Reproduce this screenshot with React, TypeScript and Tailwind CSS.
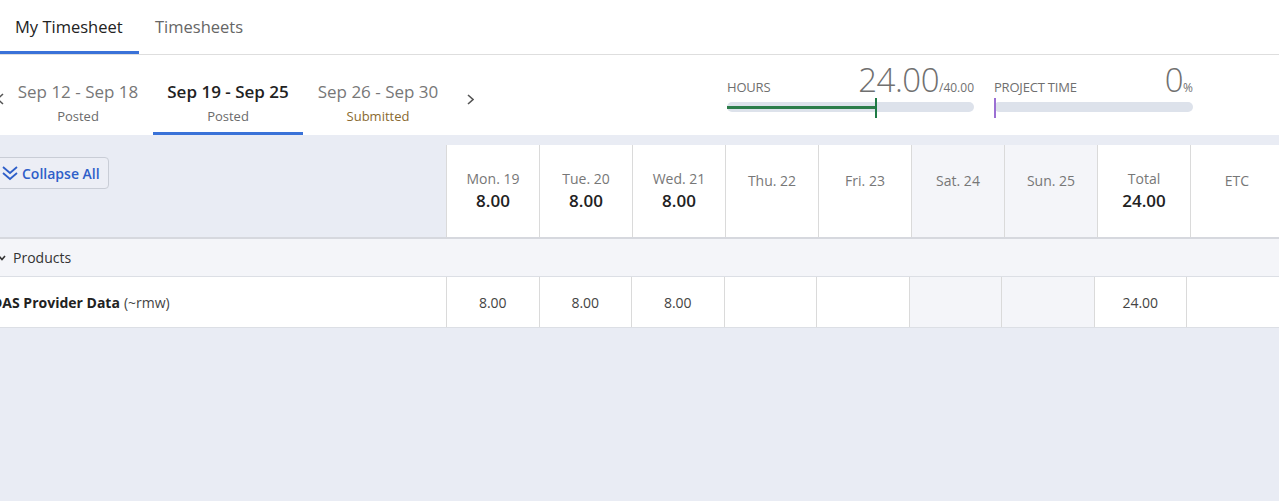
import React from 'react';

const WEEKS = [
  { label: 'Sep 12 - Sep 18', status: 'Posted', active: false },
  { label: 'Sep 19 - Sep 25', status: 'Posted', active: true },
  { label: 'Sep 26 - Sep 30', status: 'Submitted', active: false },
];

const DAYS = [
  { name: 'Mon. 19', total: '8.00', value: '8.00', weekend: false },
  { name: 'Tue. 20', total: '8.00', value: '8.00', weekend: false },
  { name: 'Wed. 21', total: '8.00', value: '8.00', weekend: false },
  { name: 'Thu. 22', total: '', value: '', weekend: false },
  { name: 'Fri. 23', total: '', value: '', weekend: false },
  { name: 'Sat. 24', total: '', value: '', weekend: true },
  { name: 'Sun. 25', total: '', value: '', weekend: true },
  { name: 'Total', total: '24.00', value: '24.00', weekend: false },
  { name: 'ETC', total: '', value: '', weekend: false },
];

const Meter: React.FC<{ label: string; value: string; suffix: string; pct: number; width: string; tick: string; fill: string }> = ({
  label,
  value,
  suffix,
  pct,
  width,
  tick,
  fill,
}) => (
  <div className={`${width} flex flex-col`}>
    <div className="flex items-baseline justify-between h-[36px]">
      <span className="text-[13px] text-[#6f6f6f] tracking-[-0.2px]">{label}</span>
      <span className="flex items-baseline text-[#707070]">
        <span className="text-[33px] font-light leading-none tracking-[-0.5px]">{value}</span>
        <span className="text-[12px]">{suffix}</span>
      </span>
    </div>
    <div className="relative mt-[3px] h-[10px] rounded-full bg-[#dde2eb] flex items-center">
      <div className={`h-[3px] ${fill}`} style={{ width: `${pct}%` }} />
      <div className={`absolute top-[-4px] h-[20px] w-[1.5px] ${tick}`} style={{ left: `${pct}%` }} />
    </div>
  </div>
);

export default function App() {
  return (
    <div className="min-h-screen w-full overflow-hidden bg-[#e9ecf4] font-['Open_Sans',sans-serif]">
      {/* tabs */}
      <div className="bg-white">
        <div className="flex h-[55px] border-b border-[#dedede]">
          <div className="w-[139px] shrink-0 flex items-center whitespace-nowrap pl-[15px] border-b-[3px] border-[#3a72d8] pt-[3px] text-[16.5px] font-medium text-[#222]">
            My Timesheet
          </div>
          <div className="flex items-center whitespace-nowrap px-[16px] text-[16.5px] text-[#666]">Timesheets</div>
        </div>

        {/* week nav + meters */}
        <div className="flex h-[80px]">
          <div className="w-[13px] shrink-0 -ml-[10px] pt-[38px]">
            <svg width="13" height="12" viewBox="0 0 13 12" className="overflow-visible">
              <polyline points="13,1 7.5,6 13,11" fill="none" stroke="#555" strokeWidth="1.6" />
            </svg>
          </div>
          {WEEKS.map((w) => (
            <div
              key={w.label}
              className={`w-[150px] shrink-0 flex flex-col items-center pt-[25px] border-b-[3px] ${w.active ? 'border-[#3a72d8]' : 'border-transparent'}`}
            >
              <span
                className={`text-[17px] leading-[24px] whitespace-nowrap ${w.active ? 'font-semibold text-[#222]' : 'text-[#777]'}`}
              >
                {w.label}
              </span>
              <span
                className={`mt-[3px] text-[13px] leading-[18px] ${w.status === 'Submitted' ? 'text-[#8a6a30]' : 'text-[#6b6b6b]'}`}
              >
                {w.status}
              </span>
            </div>
          ))}
          <div className="w-[30px] shrink-0 pt-[39px] pl-[14px]">
            <svg width="7" height="11" viewBox="0 0 7 11">
              <polyline points="1,1 6,5.5 1,10" fill="none" stroke="#555" strokeWidth="1.6" />
            </svg>
          </div>
          <div className="ml-[244px] flex gap-[20px] pt-[8px]">
            <Meter
              label="HOURS"
              value="24.00"
              suffix="/40.00"
              pct={60}
              width="w-[247px]"
              tick="bg-[#1e7b45]"
              fill="bg-[#2c7d4a]"
            />
            <Meter
              label="PROJECT TIME"
              value="0"
              suffix="%"
              pct={0}
              width="w-[199px]"
              tick="bg-[#9b6fd3]"
              fill="bg-[#2c7d4a]"
            />
          </div>
        </div>
      </div>

      {/* table */}
      <div className="pt-[10px]">
        <div className="flex h-[94px] border-b-2 border-[#d6d8de]">
          <div className="w-[446px] shrink-0 pt-[12px]">
            <button className="-ml-[10px] h-[32px] flex items-center gap-[3px] pl-[9px] pr-[8px] rounded-[4px] border border-[#c9cdd6] bg-[#eceef5] text-[14px] font-semibold text-[#2e5fc9]">
              <svg width="18" height="16" viewBox="0 0 18 16" className="ml-[1px]">
                <polyline points="2,2 9,8 16,2" fill="none" stroke="#2e5fc9" strokeWidth="1.8" />
                <polyline points="2,8 9,14 16,8" fill="none" stroke="#2e5fc9" strokeWidth="1.8" />
              </svg>
              Collapse All
            </button>
          </div>
          {DAYS.map((d) => (
            <div
              key={d.name}
              className={`w-[93px] shrink-0 flex flex-col items-center border-l border-[#dadada] ${d.weekend ? 'bg-[#f4f5f9]' : 'bg-white'} ${d.total ? 'pt-[24px]' : 'pt-[26px]'}`}
            >
              <span className="text-[14px] leading-[20px] text-[#777]">{d.name}</span>
              {d.total && <span className="mt-px text-[17px] leading-[22px] font-semibold text-[#222]">{d.total}</span>}
            </div>
          ))}
        </div>

        <div className="flex items-center h-[38px] bg-[#f4f5f9] border-b border-[#dcdfe5]">
          <svg width="8" height="6" viewBox="0 0 8 6" className="-ml-[2px]">
            <polyline points="1,1 4,4.5 7,1" fill="none" stroke="#333" strokeWidth="1.6" />
          </svg>
          <span className="ml-[7px] text-[14px] text-[#333]">Products</span>
        </div>

        <div className="flex h-[51px] bg-white border-b border-[#dcdfe5]">
          <div className="w-[446px] shrink-0 flex items-center -ml-[8px] text-[14px] text-[#444]">
            <span className="font-bold text-[#222]">DAS Provider Data</span>
            <span className="ml-[4px]">(~rmw)</span>
          </div>
          <div className="w-[8px] shrink-0" />
          {DAYS.map((d) => (
            <div
              key={d.name}
              className={`w-[92.5px] shrink-0 flex items-center justify-center border-l border-[#dadada] text-[14px] text-[#444] ${d.weekend ? 'bg-[#f4f5f9]' : 'bg-white'}`}
            >
              {d.value}
            </div>
          ))}
        </div>
      </div>
    </div>
  );
}
